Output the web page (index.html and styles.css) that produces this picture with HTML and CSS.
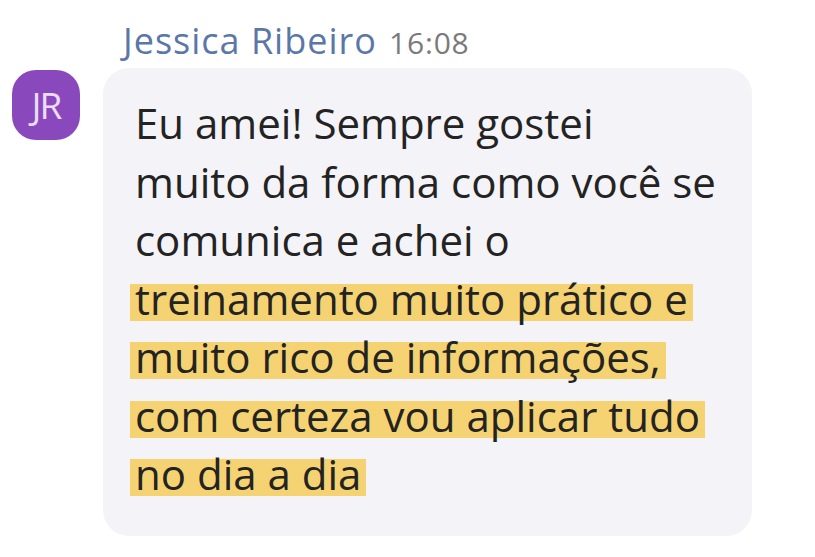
FILE: index.html
```html
<!DOCTYPE html>
<html lang="pt-BR">
<head>
    <meta charset="UTF-8">
    <meta name="viewport" content="width=device-width, initial-scale=1.0">
    <title>Mensagem</title>
    <link rel="stylesheet" href="styles.css">
</head>
<body>
    <div class="message">
        <div class="msgHeader">
            <span class="author">Jessica Ribeiro</span>
            <span class="time">16:08</span>
        </div>
        <div class="avatar">JR</div>
        <div class="bubble">
            <p>Eu amei! Sempre gostei<br>
            muito da forma como você se<br>
            comunica e achei o<br>
            <span class="mark">treinamento muito prático e<br>
            muito rico de informações,<br>
            com certeza vou aplicar tudo<br>
            no dia a dia</span></p>
        </div>
    </div>
</body>
</html>
```

FILE: styles.css
```css
body{
    margin: 0;
    background: #ffffff;
    font-family: "Open Sans", "Noto Sans", sans-serif;
}
.message{
    display: grid;
    grid-template-columns: 68px 649px;
    column-gap: 23px;
    padding: 18px 0 0 12px;
}
.msgHeader{
    grid-column: 2;
    padding-left: 20px;
    height: 50px;
    line-height: 46px;
    white-space: nowrap;
}
.author{
    font-size: 36px;
    letter-spacing: 1px;
    color: #5a77a8;
    margin-right: 8px;
}
.time{
    font-size: 30px;
    letter-spacing: 0.8px;
    color: #7a7a7a;
}
.avatar{
    grid-column: 1;
    grid-row: 2;
    width: 68px;
    height: 70px;
    margin-top: 2px;
    border-radius: 24px;
    background: #8a48bd;
    color: #ecdcf7;
    font-size: 37px;
    line-height: 70px;
    text-align: center;
    letter-spacing: -2px;
}
.bubble{
    grid-column: 2;
    grid-row: 2;
    background: #f3f3f8;
    border-radius: 26px;
    padding: 26px 10px 32px 32px;
}
.bubble p{
    margin: 0;
    font-size: 42px;
    line-height: 58.5px;
    color: #232323;
    white-space: nowrap;
}
.mark{
    background: linear-gradient(transparent 25%, rgba(245, 205, 90, 0.85) 25%, rgba(245, 205, 90, 0.85) 90%, transparent 90%);
    -webkit-box-decoration-break: clone;
    box-decoration-break: clone;
    padding: 0 5px;
    margin-left: -5px;
}
```
